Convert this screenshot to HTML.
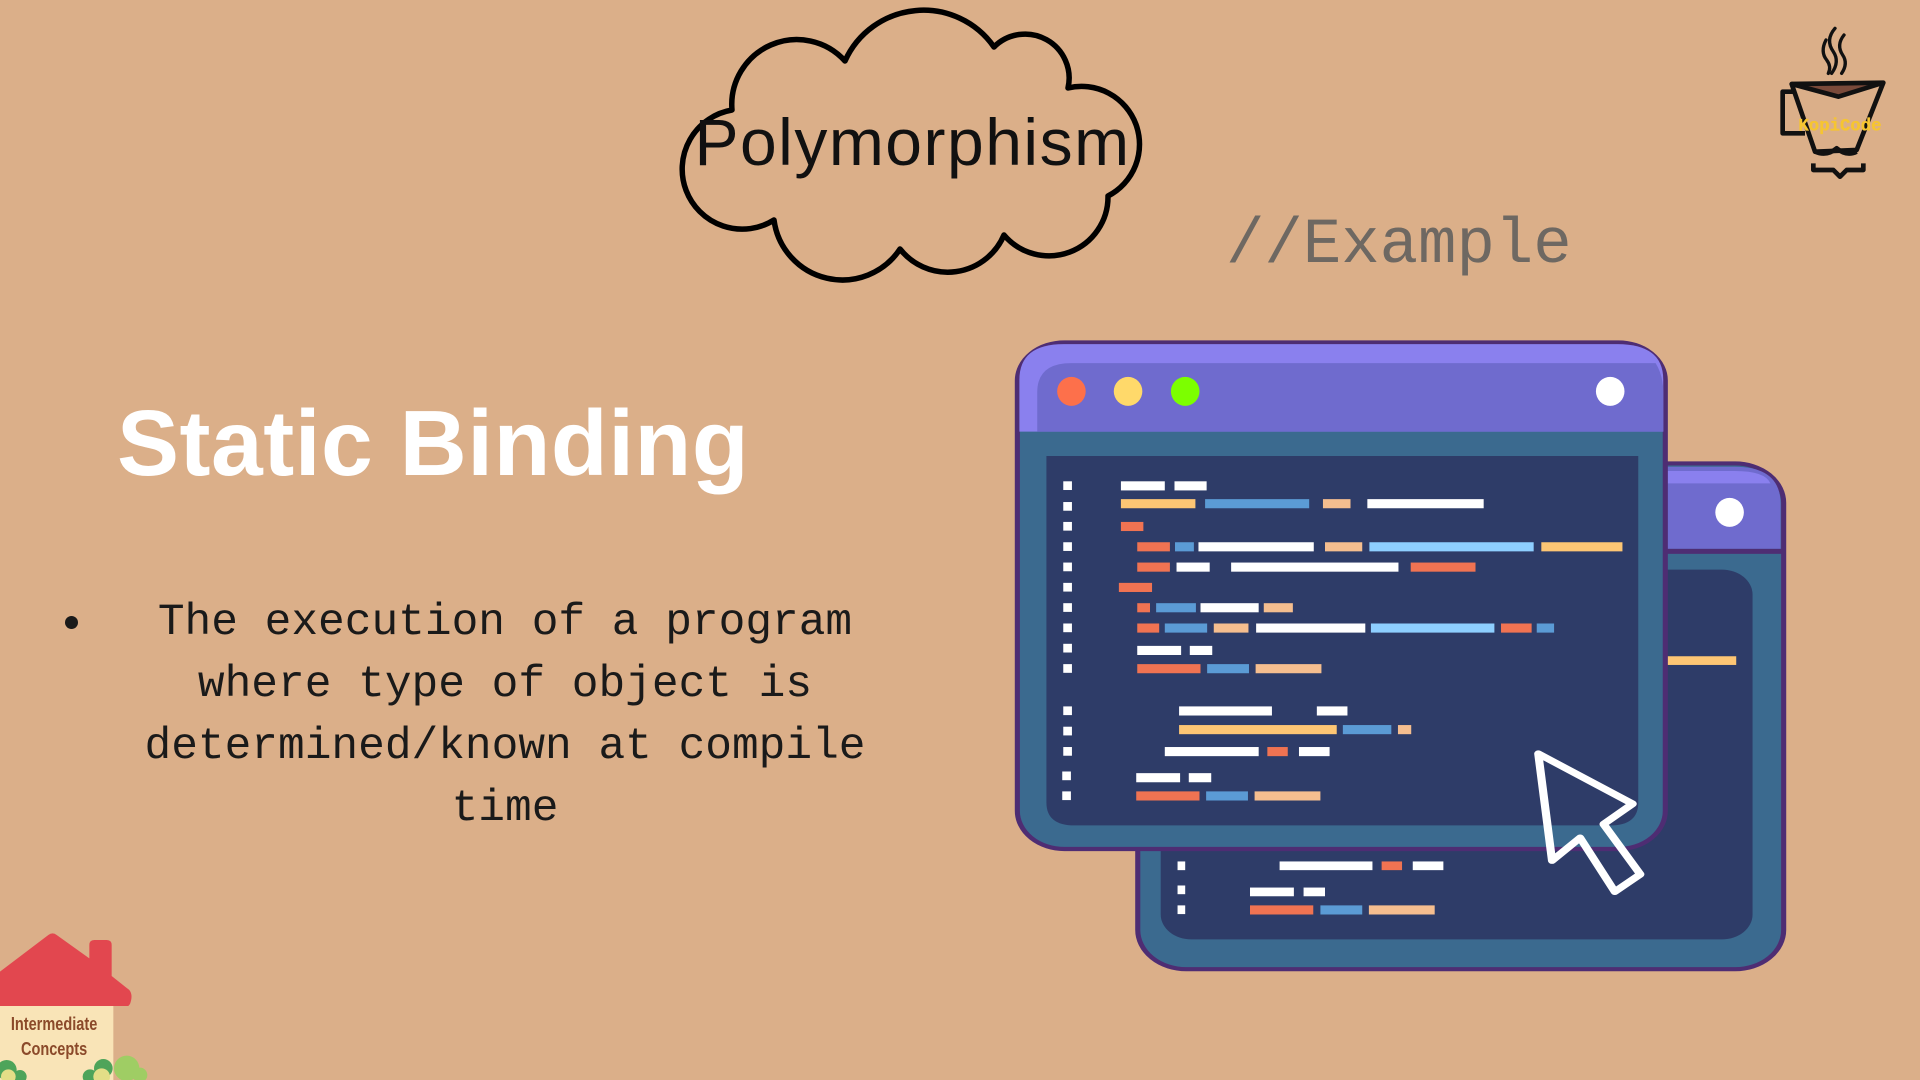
<!DOCTYPE html>
<html><head><meta charset="utf-8"><style>
html,body{margin:0;padding:0}
body{width:1920px;height:1080px;background:#dbaf89;position:relative;overflow:hidden;font-family:"Liberation Sans",sans-serif}
.abs{position:absolute}
#title{left:0;width:1825px;text-align:center;top:104px;font-size:66px;color:#111;letter-spacing:1.5px}
#ex{left:1226px;top:210px;font-family:"Liberation Mono",monospace;font-size:64px;color:#6e6862}
#sb{left:117px;top:390px;font-size:93px;font-weight:bold;color:#fff;letter-spacing:0.5px}
#body{left:105px;width:800px;top:592px;text-align:center;font-family:"Liberation Mono",monospace;font-size:44.5px;line-height:62px;color:#1a1a1a}
#bullet{left:65px;top:616px;width:13px;height:13px;border-radius:50%;background:#1a1a1a}
</style></head><body>

<svg class="abs" style="left:0;top:0" width="1920" height="1080">
  <path d="M732 110 A65 65 0 0 1 845 61 A86 86 0 0 1 994 47 A44 44 0 0 1 1068 88 A58 58 0 0 1 1108 196 A59 59 0 0 1 1004 235 A61 61 0 0 1 900 249 A69 69 0 0 1 774 220 A60 60 0 1 1 732 110 Z" fill="none" stroke="#000" stroke-width="5.5" stroke-linejoin="round"/>
</svg>

<div id="title" class="abs">Polymorphism</div>
<div id="ex" class="abs">//Example</div>
<div id="sb" class="abs">Static Binding</div>
<div id="bullet" class="abs"></div>
<div id="body" class="abs">The execution of a program<br>where type of object is<br>determined/known at compile<br>time</div>

<svg class="abs" style="left:1000px;top:330px" width="800" height="650" viewBox="0 0 1568 1568" preserveAspectRatio="none">
  <rect x="270" y="322" width="1266" height="1220" rx="95" fill="#3b6a8f" stroke="#4e2d73" stroke-width="10"/>
  <path d="M275 528 V420 Q275 330 365 330 H1440 Q1530 330 1530 420 V528 Z" fill="#6f6bce"/>
  <path d="M1300 340 H1440 Q1500 340 1510 370 H1300 Z" fill="#8a80ee"/>
  <rect x="275" y="528" width="1258" height="12" fill="#4e2d73"/>
  <ellipse cx="1430" cy="440" rx="28" ry="35" fill="#fff"/>
  <rect x="315" y="578" width="1160" height="892" rx="60" fill="#2e3c68"/>
  <g>
    <rect x="1300" y="787" width="143" height="21" fill="#fdc674"/>
    <rect x="1300" y="983" width="8" height="20" fill="#5b9bd5"/>
    <rect x="348" y="1233" width="15" height="20" fill="#fff"/>
    <rect x="575" y="1240" width="308" height="10" fill="#fdc674"/>
    <rect x="895" y="1240" width="95" height="10" fill="#5b9bd5"/>
    <rect x="1005" y="1240" width="23" height="10" fill="#f5be8f"/>
    <rect x="348" y="1282" width="15" height="21" fill="#fff"/>
    <rect x="548" y="1282" width="182" height="21" fill="#fff"/>
    <rect x="748" y="1282" width="40" height="21" fill="#f07352"/>
    <rect x="809" y="1282" width="60" height="21" fill="#fff"/>
    <rect x="348" y="1340" width="15" height="21" fill="#fff"/>
    <rect x="490" y="1345" width="86" height="21" fill="#fff"/>
    <rect x="595" y="1345" width="42" height="21" fill="#fff"/>
    <rect x="348" y="1388" width="15" height="21" fill="#fff"/>
    <rect x="490" y="1388" width="124" height="22" fill="#f07352"/>
    <rect x="628" y="1388" width="82" height="22" fill="#5b9bd5"/>
    <rect x="723" y="1388" width="129" height="22" fill="#f5be8f"/>
  </g>

  <rect x="34" y="30" width="1270" height="1222" rx="92" fill="#3b6a8f" stroke="#4e2d73" stroke-width="10"/>
  <path d="M38 245 V120 Q38 34 125 34 H1210 Q1300 34 1300 120 V245 Z" fill="#8a80ee"/>
  <path d="M73 245 V150 Q73 80 140 80 H1285 Q1300 110 1300 150 V245 Z" fill="#6f6bce"/>
  <ellipse cx="140" cy="148" rx="28" ry="35" fill="#fd704b"/>
  <ellipse cx="251" cy="148" rx="28" ry="35" fill="#ffd96a"/>
  <ellipse cx="363" cy="148" rx="28" ry="35" fill="#7cff00"/>
  <ellipse cx="1196" cy="148" rx="28" ry="35" fill="#fff"/>
  <path d="M91 304 H1251 V1140 Q1251 1195 1196 1195 H146 Q91 1195 91 1140 Z" fill="#2e3c68"/>
  <g fill="#fff">
    <rect x="124" y="365" width="17" height="21"/><rect x="124" y="415" width="17" height="21"/>
    <rect x="124" y="463" width="17" height="21"/><rect x="124" y="512" width="17" height="21"/>
    <rect x="124" y="561" width="17" height="21"/><rect x="124" y="610" width="17" height="21"/>
    <rect x="124" y="659" width="17" height="21"/><rect x="124" y="708" width="17" height="21"/>
    <rect x="124" y="757" width="17" height="21"/><rect x="124" y="806" width="17" height="21"/>
    <rect x="124" y="908" width="17" height="21"/><rect x="124" y="957" width="17" height="21"/>
    <rect x="124" y="1006" width="17" height="21"/><rect x="122" y="1065" width="17" height="21"/>
    <rect x="122" y="1113" width="17" height="21"/>
  </g>
  <g>
    <rect x="237" y="365" width="86" height="22" fill="#fff"/><rect x="342" y="365" width="63" height="22" fill="#fff"/>
    <rect x="237" y="408" width="146" height="22" fill="#fdc674"/><rect x="402" y="408" width="204" height="22" fill="#5b9bd5"/><rect x="633" y="408" width="54" height="22" fill="#f5be8f"/><rect x="720" y="408" width="228" height="22" fill="#fff"/>
    <rect x="237" y="463" width="44" height="22" fill="#f07352"/>
    <rect x="269" y="512" width="64" height="22" fill="#f07352"/><rect x="343" y="512" width="37" height="22" fill="#5b9bd5"/><rect x="389" y="512" width="226" height="22" fill="#fff"/><rect x="637" y="512" width="73" height="22" fill="#f5be8f"/><rect x="724" y="512" width="322" height="22" fill="#8ecfff"/><rect x="1061" y="512" width="159" height="22" fill="#fdc674"/>
    <rect x="269" y="561" width="64" height="22" fill="#f07352"/><rect x="346" y="561" width="65" height="22" fill="#fff"/><rect x="453" y="561" width="328" height="22" fill="#fff"/><rect x="805" y="561" width="127" height="22" fill="#f07352"/>
    <rect x="233" y="610" width="65" height="22" fill="#f07352"/>
    <rect x="269" y="659" width="25" height="22" fill="#f07352"/><rect x="306" y="659" width="78" height="22" fill="#5b9bd5"/><rect x="393" y="659" width="114" height="22" fill="#fff"/><rect x="517" y="659" width="57" height="22" fill="#f5be8f"/>
    <rect x="269" y="708" width="43" height="22" fill="#f07352"/><rect x="323" y="708" width="83" height="22" fill="#5b9bd5"/><rect x="419" y="708" width="68" height="22" fill="#f5be8f"/><rect x="502" y="708" width="214" height="22" fill="#fff"/><rect x="727" y="708" width="242" height="22" fill="#8ecfff"/><rect x="982" y="708" width="60" height="22" fill="#f07352"/><rect x="1052" y="708" width="34" height="22" fill="#5b9bd5"/>
    <rect x="269" y="762" width="86" height="22" fill="#fff"/><rect x="372" y="762" width="44" height="22" fill="#fff"/>
    <rect x="269" y="806" width="124" height="22" fill="#f07352"/><rect x="406" y="806" width="82" height="22" fill="#5b9bd5"/><rect x="501" y="806" width="129" height="22" fill="#f5be8f"/>
    <rect x="351" y="908" width="182" height="22" fill="#fff"/><rect x="621" y="908" width="60" height="22" fill="#fff"/>
    <rect x="351" y="953" width="309" height="22" fill="#fdc674"/><rect x="672" y="953" width="95" height="22" fill="#5b9bd5"/><rect x="780" y="953" width="26" height="22" fill="#f5be8f"/>
    <rect x="323" y="1006" width="184" height="22" fill="#fff"/><rect x="524" y="1006" width="40" height="22" fill="#f07352"/><rect x="586" y="1006" width="60" height="22" fill="#fff"/>
    <rect x="267" y="1069" width="86" height="22" fill="#fff"/><rect x="370" y="1069" width="44" height="22" fill="#fff"/>
    <rect x="267" y="1113" width="124" height="22" fill="#f07352"/><rect x="404" y="1113" width="82" height="22" fill="#5b9bd5"/><rect x="499" y="1113" width="129" height="22" fill="#f5be8f"/>
  </g>
  <path d="M1055 1022 L1240 1143 L1183 1192 L1255 1313 L1205 1355 L1137 1225 L1082 1280 Z" fill="none" stroke="#fff" stroke-width="16" stroke-linejoin="round"/>
</svg>

<svg class="abs" style="left:0;top:900px" width="200" height="180" viewBox="0 0 600 540">
  <rect x="0" y="315" width="340" height="225" fill="#f9e4b7"/>
  <path d="M0 215 L145 105 Q158 95 170 105 L268 175 V135 Q268 120 283 120 H320 Q335 120 335 135 V228 L388 270 Q400 285 390 312 L385 318 H0 Z" fill="#e2474f"/>
  <g transform="scale(0.78,1)">
  <text x="208" y="390" text-anchor="middle" font-family="'Liberation Sans',sans-serif" font-weight="bold" font-size="56" fill="#8b4a2a">Intermediate</text>
  <text x="208" y="465" text-anchor="middle" font-family="'Liberation Sans',sans-serif" font-weight="bold" font-size="56" fill="#8b4a2a">Concepts</text>
  </g>
  <circle cx="20" cy="510" r="30" fill="#4ea45a"/><circle cx="60" cy="530" r="20" fill="#4ea45a"/>
  <circle cx="25" cy="530" r="22" fill="#e3de87"/>
  <circle cx="310" cy="505" r="28" fill="#4ea45a"/><circle cx="270" cy="530" r="22" fill="#4ea45a"/>
  <circle cx="380" cy="505" r="38" fill="#9fcd64"/><circle cx="420" cy="525" r="22" fill="#9fcd64"/>
  <circle cx="305" cy="530" r="25" fill="#e3de87"/>
</svg>

<svg class="abs" style="left:1760px;top:20px" width="140" height="170" viewBox="0 0 420 510">
  <g fill="none" stroke="#111" stroke-width="10" stroke-linecap="round">
    <path d="M225 25 Q195 60 220 95 Q240 125 215 160"/>
    <path d="M252 45 Q228 75 248 105 Q265 130 245 160"/>
    <path d="M198 60 Q180 95 200 120 Q215 140 205 160"/>
  </g>
  <path d="M100 195 L370 195 L240 232 Z" fill="#7a4a3a"/>
  <g fill="none" stroke="#111" stroke-width="14" stroke-linejoin="round">
    <path d="M95 192 L370 188 L290 390 L165 395 Z"/>
    <path d="M95 192 L235 230 L370 188"/>
    <path d="M100 215 H68 V340 H135"/>
    <path d="M165 395 Q200 410 230 385 Q260 410 290 395"/>
    <path d="M160 430 V450 H220 L240 470 L260 450 H310 V430"/>
  </g>
  <text x="240" y="332" text-anchor="middle" font-family="'Liberation Mono',monospace" font-weight="bold" font-size="52" fill="#f6c531" stroke="#f6c531" stroke-width="1">KopiCode</text>
</svg>

</body></html>
